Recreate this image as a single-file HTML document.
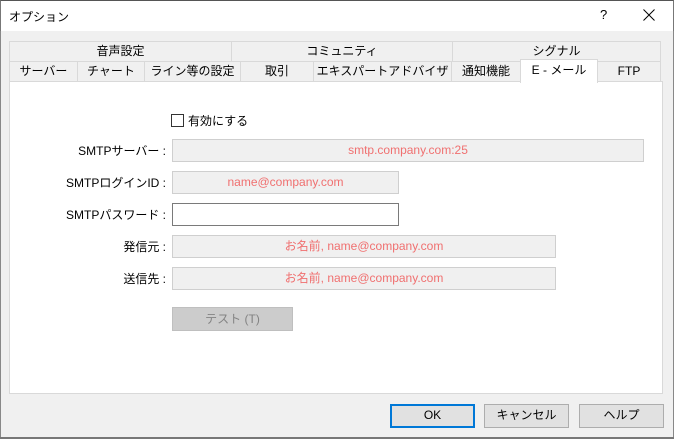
<html><head><style>
body{margin:0;width:674px;height:439px;overflow:hidden;background:#f0f0f0;font-family:"Liberation Sans","Noto Sans CJK JP",sans-serif;font-size:12px;color:#000;position:relative}
.a{position:absolute;box-sizing:border-box}
.tab{position:absolute;box-sizing:border-box;border:1px solid #d9d9d9;background:#f0f0f0;text-align:center;line-height:18px;font-size:12px}
.in{position:absolute;box-sizing:border-box;border:1px solid #cfcfcf;background:#f0f0f0;color:#f07070;text-align:center;line-height:20px;font-size:12px}
.lb{position:absolute;right:508px;text-align:right;font-size:12px}
.bt{position:absolute;box-sizing:border-box;border:1px solid #adadad;background:#e1e1e1;text-align:center;line-height:21px;top:404px;height:24px;width:85px}
</style></head><body>
<div class="a" style="left:0;top:0;width:674px;height:31px;background:#fff;border-top:1px solid #555;border-left:1px solid #777;border-right:1px solid #777"></div>
<div class="a" style="left:9px;top:8px;font-size:12px">オプション</div>
<div class="a" style="left:600px;top:7px;font-size:13px">?</div>
<svg class="a" style="left:643px;top:9px" width="12" height="12"><path d="M0.5 0.5L11.5 11.5M11.5 0.5L0.5 11.5" stroke="#000" stroke-width="1"/></svg>
<div class="a" style="left:0;top:31px;width:1px;height:408px;background:#888"></div>
<div class="a" style="right:0;top:31px;width:1px;height:408px;background:#888"></div>
<div class="tab" style="left:9px;top:41px;width:223px;height:21px">音声設定</div>
<div class="tab" style="left:231px;top:41px;width:222px;height:21px">コミュニティ</div>
<div class="tab" style="left:452px;top:41px;width:209px;height:21px">シグナル</div>
<div class="tab" style="left:9px;top:61px;width:69px;height:21px">サーバー</div>
<div class="tab" style="left:77px;top:61px;width:68px;height:21px">チャート</div>
<div class="tab" style="left:144px;top:61px;width:97px;height:21px">ライン等の設定</div>
<div class="tab" style="left:240px;top:61px;width:74px;height:21px">取引</div>
<div class="tab" style="left:313px;top:61px;width:139px;height:21px">エキスパートアドバイザ</div>
<div class="tab" style="left:451px;top:61px;width:70px;height:21px">通知機能</div>
<div class="tab" style="left:597px;top:61px;width:64px;height:21px">FTP</div>
<div class="a" style="left:9px;top:81px;width:654px;height:313px;background:#fff;border:1px solid #d9d9d9"></div>
<div class="a" style="left:520px;top:59px;width:78px;height:24px;background:#fff;border:1px solid #d9d9d9;border-bottom:none;text-align:center;line-height:20px">E - メール</div>
<div class="a" style="left:171px;top:114px;width:13px;height:13px;border:1px solid #333;background:#fff"></div>
<div class="a" style="left:188px;top:112px">有効にする</div>
<div class="lb" style="top:142px">SMTPサーバー :</div>
<div class="in" style="left:172px;top:139px;width:472px;height:23px">smtp.company.com:25</div>
<div class="lb" style="top:174px">SMTPログインID :</div>
<div class="in" style="left:172px;top:171px;width:227px;height:23px">name@company.com</div>
<div class="lb" style="top:206px">SMTPパスワード :</div>
<div class="in" style="left:172px;top:203px;width:227px;height:23px;background:#fff;border-color:#7a7a7a"></div>
<div class="lb" style="top:238px">発信元 :</div>
<div class="in" style="left:172px;top:235px;width:384px;height:23px">お名前, name@company.com</div>
<div class="lb" style="top:270px">送信先 :</div>
<div class="in" style="left:172px;top:267px;width:384px;height:23px">お名前, name@company.com</div>
<div class="a" style="left:172px;top:307px;width:121px;height:24px;border:1px solid #bfbfbf;background:#cccccc;color:#838383;text-align:center;line-height:22px">テスト (T)</div>
<div class="bt" style="left:390px;border:2px solid #0078d7;line-height:19px">OK</div>
<div class="bt" style="left:484px">キャンセル</div>
<div class="bt" style="left:579px">ヘルプ</div>
<div class="a" style="left:0;top:437px;width:674px;height:2px;background:#777"></div>
</body></html>
